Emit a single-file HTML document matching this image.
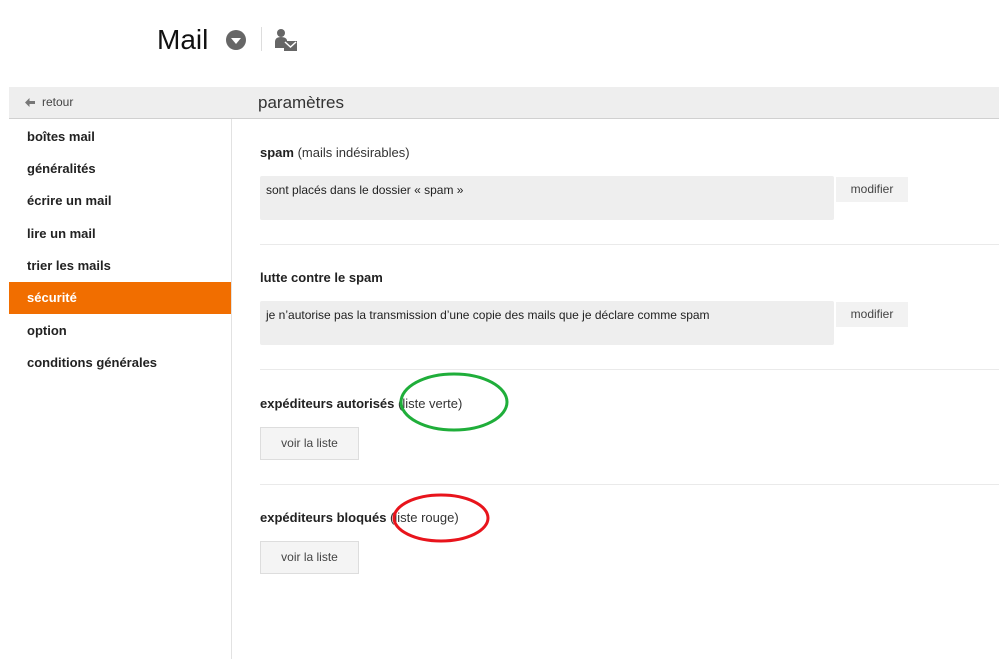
<!DOCTYPE html>
<html><head><meta charset="utf-8"><style>
body{margin:0;width:999px;height:659px;background:#fff;font-family:"Liberation Sans",Arial,sans-serif;position:relative;overflow:hidden;color:#222}
.a{position:absolute;white-space:nowrap}
.m{left:27px;font-size:13px;font-weight:bold;color:#222}
.t{left:260px;font-size:13px;font-weight:bold;color:#222}
.t span{font-weight:normal;color:#333}
.box{position:absolute;left:260px;width:574px;height:44px;background:#eee;border-radius:2px;font-size:12px;color:#222}
.box div{padding:7px 6px}
.mod{position:absolute;left:836px;width:72px;height:25px;background:#f2f2f2;font-size:12px;color:#444;text-align:center;line-height:25px}
.hr{position:absolute;left:260px;right:0;height:1px;background:#eaeaea}
.btn{position:absolute;left:260px;width:97px;height:31px;background:#f4f4f4;border:1px solid #ddd;font-size:12px;color:#444;text-align:center;line-height:31px}
</style></head><body>
<div class="a" style="left:157px;top:24px;font-size:28px;color:#111">Mail</div>
<svg class="a" style="left:225px;top:29px" width="22" height="22"><circle cx="11" cy="11" r="10" fill="#666"/><path d="M6 9h10l-5 6z" fill="#fff"/></svg>
<div class="a" style="left:261px;top:27px;width:1px;height:24px;background:#ddd"></div>
<svg class="a" style="left:274px;top:28px" width="24" height="26"><circle cx="7" cy="5" r="4" fill="#666"/><path d="M1 20v-6q0-5 6-5 5 0 6 3v8z" fill="#666"/><rect x="10" y="13" width="13" height="10" fill="#666"/><path d="M11 14l5.5 5 5.5-5" stroke="#fff" stroke-width="1.5" fill="none"/></svg>
<div class="a" style="left:9px;top:87px;width:990px;height:31px;background:#eee;border-bottom:1px solid #d0d0d0"></div>
<svg class="a" style="left:25px;top:98px" width="10" height="9"><path d="M0 4.5L4.5 0v3H10v3H4.5v3z" fill="#777"/></svg>
<div class="a" style="left:42px;top:95px;font-size:12px;color:#444">retour</div>
<div class="a" style="left:258px;top:93px;font-size:17px;color:#333">paramètres</div>
<div class="a" style="left:231px;top:119px;width:1px;height:540px;background:#e2e2e2"></div>
<div class="a" style="left:9px;top:282px;width:222px;height:32px;background:#f16e00"></div>
<div class="a m" style="top:129px">boîtes mail</div>
<div class="a m" style="top:161px">généralités</div>
<div class="a m" style="top:193px">écrire un mail</div>
<div class="a m" style="top:226px">lire un mail</div>
<div class="a m" style="top:258px">trier les mails</div>
<div class="a m" style="top:290px;color:#fff">sécurité</div>
<div class="a m" style="top:323px">option</div>
<div class="a m" style="top:355px">conditions générales</div>
<div class="a t" style="top:145px">spam <span>(mails indésirables)</span></div>
<div class="box" style="top:176px"><div>sont placés dans le dossier « spam »</div></div>
<div class="mod" style="top:177px">modifier</div>
<div class="hr" style="top:244px"></div>
<div class="a t" style="top:270px">lutte contre le spam</div>
<div class="box" style="top:301px"><div>je n’autorise pas la transmission d’une copie des mails que je déclare comme spam</div></div>
<div class="mod" style="top:302px">modifier</div>
<div class="hr" style="top:369px"></div>
<div class="a t" style="top:396px">expéditeurs autorisés <span>(liste verte)</span></div>
<div class="btn" style="top:427px">voir la liste</div>
<div class="hr" style="top:484px"></div>
<div class="a t" style="top:510px">expéditeurs bloqués <span>(liste rouge)</span></div>
<div class="btn" style="top:541px">voir la liste</div>
<svg class="a" style="left:0;top:0" width="999" height="659"><ellipse cx="454" cy="402" rx="53" ry="28" fill="none" stroke="#1fae3a" stroke-width="3"/><ellipse cx="441" cy="518" rx="47" ry="23" fill="none" stroke="#e8141c" stroke-width="3"/></svg>
</body></html>
